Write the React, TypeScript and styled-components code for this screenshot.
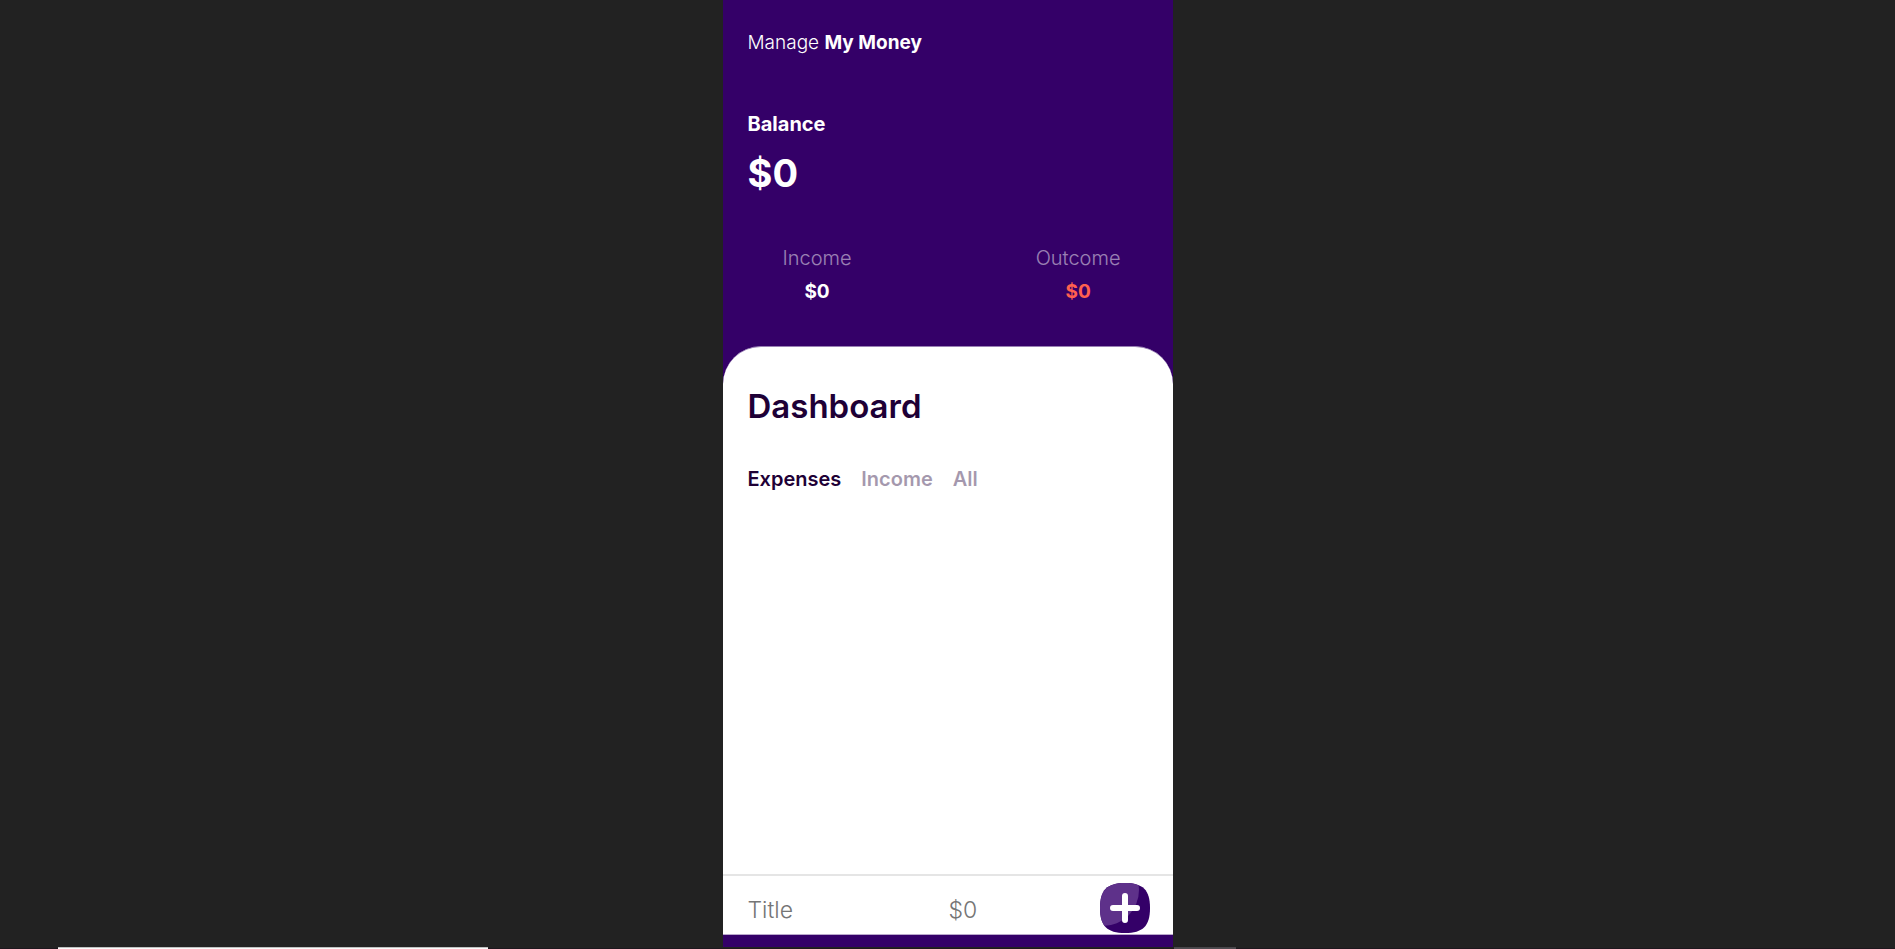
import React, { useState } from "react";
import styled, { createGlobalStyle } from "styled-components";

const GlobalStyle = createGlobalStyle`
  * { box-sizing: border-box; margin: 0; padding: 0; }
  body {
    background: #222222;
    color: #ffffff;
    font-family: Gilroy, Inter, "Liberation Sans", sans-serif;
  }
  button, input { font: inherit; border: 0; background: none; }
`;

const Page = styled.div`
  min-height: 100vh;
  display: flex;
  flex-direction: column;
`;

const Budget = styled.main`
  flex: 1;
  width: 100%;
  max-width: 450px;
  margin: 0 auto;
  padding-bottom: 12px;
  display: flex;
  flex-direction: column;
  background: #340068;
`;

const Header = styled.header`
  padding: 30px 25px 42px;
`;

const AppName = styled.h1`
  font-size: 19px;
  font-weight: 300;
  line-height: 26px;
  b { font-weight: 700; }
`;

const Balance = styled.section`
  margin-top: 56px;
`;

const BalanceTitle = styled.h2`
  font-size: 20px;
  font-weight: 700;
  line-height: 24px;
`;

const BalanceValue = styled.p`
  margin-top: 12px;
  font-size: 38px;
  font-weight: 700;
  line-height: 50px;
`;

const Account = styled.section`
  display: flex;
  justify-content: space-between;
  margin-top: 48px;
  padding: 0 27px 0 35px;
`;

const Total = styled.div`
  text-align: center;
`;

const TotalTitle = styled.h3`
  font-size: 20px;
  font-weight: 300;
  line-height: 24px;
  opacity: 0.5;
`;

const TotalValue = styled.p<{ $color: string }>`
  margin-top: 10px;
  font-size: 19px;
  font-weight: 700;
  line-height: 24px;
  color: ${({ $color }) => $color};
`;

const Dashboard = styled.section`
  flex: 1;
  display: flex;
  flex-direction: column;
  background: #ffffff;
  border-top: 1px solid #9980b4;
  border-radius: 38px 38px 0 0;
  color: #1e0036;
`;

const DashboardTop = styled.div`
  flex: 1;
  padding: 38px 25px;
`;

const DashboardTitle = styled.h2`
  font-size: 33px;
  font-weight: 600;
  line-height: 42px;
`;

const Tabs = styled.nav`
  display: flex;
  gap: 20px;
  margin-top: 38px;
`;

const Tab = styled.button<{ $active: boolean }>`
  color: #1e0036;
  font-size: 20px;
  font-weight: 600;
  line-height: 28px;
  opacity: ${({ $active }) => ($active ? 1 : 0.4)};
  cursor: pointer;
`;

const EntryForm = styled.form`
  display: flex;
  align-items: center;
  height: 61px;
  padding: 5px 23px 0 25px;
  border-top: 2px solid #e5e5e5;
  border-bottom: 1px solid #b9a8cb;
`;

const Field = styled.input<{ $width: number }>`
  width: ${({ $width }) => $width}px;
  min-width: 0;
  padding-top: 4px;
  font-size: 23px;
  font-weight: 300;
  line-height: 30px;
  color: #1e0036;
  outline: none;
  &::placeholder { color: #757575; opacity: 1; }
`;

const AddButton = styled.button`
  margin-left: auto;
  width: 50px;
  height: 50px;
  cursor: pointer;
  svg { display: block; }
`;

const BottomStrip = styled.footer`
  height: 2px;
  display: grid;
  grid-template-columns: 1fr 450px 1fr;
  background: #1e171e;
  border-top: 1px solid #222222;
`;

const StripItem = styled.div<{ $offset: number; $width: number; $edge: string; $fill: string }>`
  width: ${({ $width }) => $width}px;
  height: 2px;
  margin: -1px 0 0 ${({ $offset }) => $offset}px;
  background: ${({ $fill }) => $fill};
  border-top: 1px solid ${({ $edge }) => $edge};
`;

const tabs = ["Expenses", "Income", "All"];

export default function App() {
  const [active, setActive] = useState("Expenses");
  return (
    <Page>
      <GlobalStyle />
      <Budget>
        <Header>
          <AppName>Manage <b>My Money</b></AppName>
          <Balance>
            <BalanceTitle>Balance</BalanceTitle>
            <BalanceValue>$0</BalanceValue>
          </Balance>
          <Account>
            <Total>
              <TotalTitle>Income</TotalTitle>
              <TotalValue $color="#ffffff">$0</TotalValue>
            </Total>
            <Total>
              <TotalTitle>Outcome</TotalTitle>
              <TotalValue $color="#ff604f">$0</TotalValue>
            </Total>
          </Account>
        </Header>
        <Dashboard>
          <DashboardTop>
            <DashboardTitle>Dashboard</DashboardTitle>
            <Tabs>
              {tabs.map((tab) => (
                <Tab key={tab} type="button" $active={tab === active} onClick={() => setActive(tab)}>
                  {tab}
                </Tab>
              ))}
            </Tabs>
          </DashboardTop>
          <EntryForm onSubmit={(e) => e.preventDefault()}>
            <Field $width={201} aria-label="Title" placeholder="Title" />
            <Field $width={120} aria-label="Amount" placeholder="$0" />
            <AddButton aria-label="Add entry">
              <svg width="50" height="50" viewBox="0 0 50 50">
                <defs>
                  <clipPath id="tile">
                    <path d="M25 0C43 0 50 7 50 25S43 50 25 50 0 43 0 25 7 0 25 0Z" />
                  </clipPath>
                </defs>
                <g clipPath="url(#tile)">
                  <rect width="50" height="50" fill="#340068" />
                  <circle cx="3" cy="7" r="36" fill="#5e318a" />
                </g>
                <path d="M25 13V37M13 25H37" stroke="#ffffff" strokeWidth="6" strokeLinecap="round" />
              </svg>
            </AddButton>
          </EntryForm>
        </Dashboard>
      </Budget>
      <BottomStrip>
        <StripItem $offset={58} $width={430} $edge="#c0c0c0" $fill="#fafafa" />
        <div />
        <StripItem $offset={1} $width={62} $edge="#48464a" $fill="#4e4b50" />
      </BottomStrip>
    </Page>
  );
}
